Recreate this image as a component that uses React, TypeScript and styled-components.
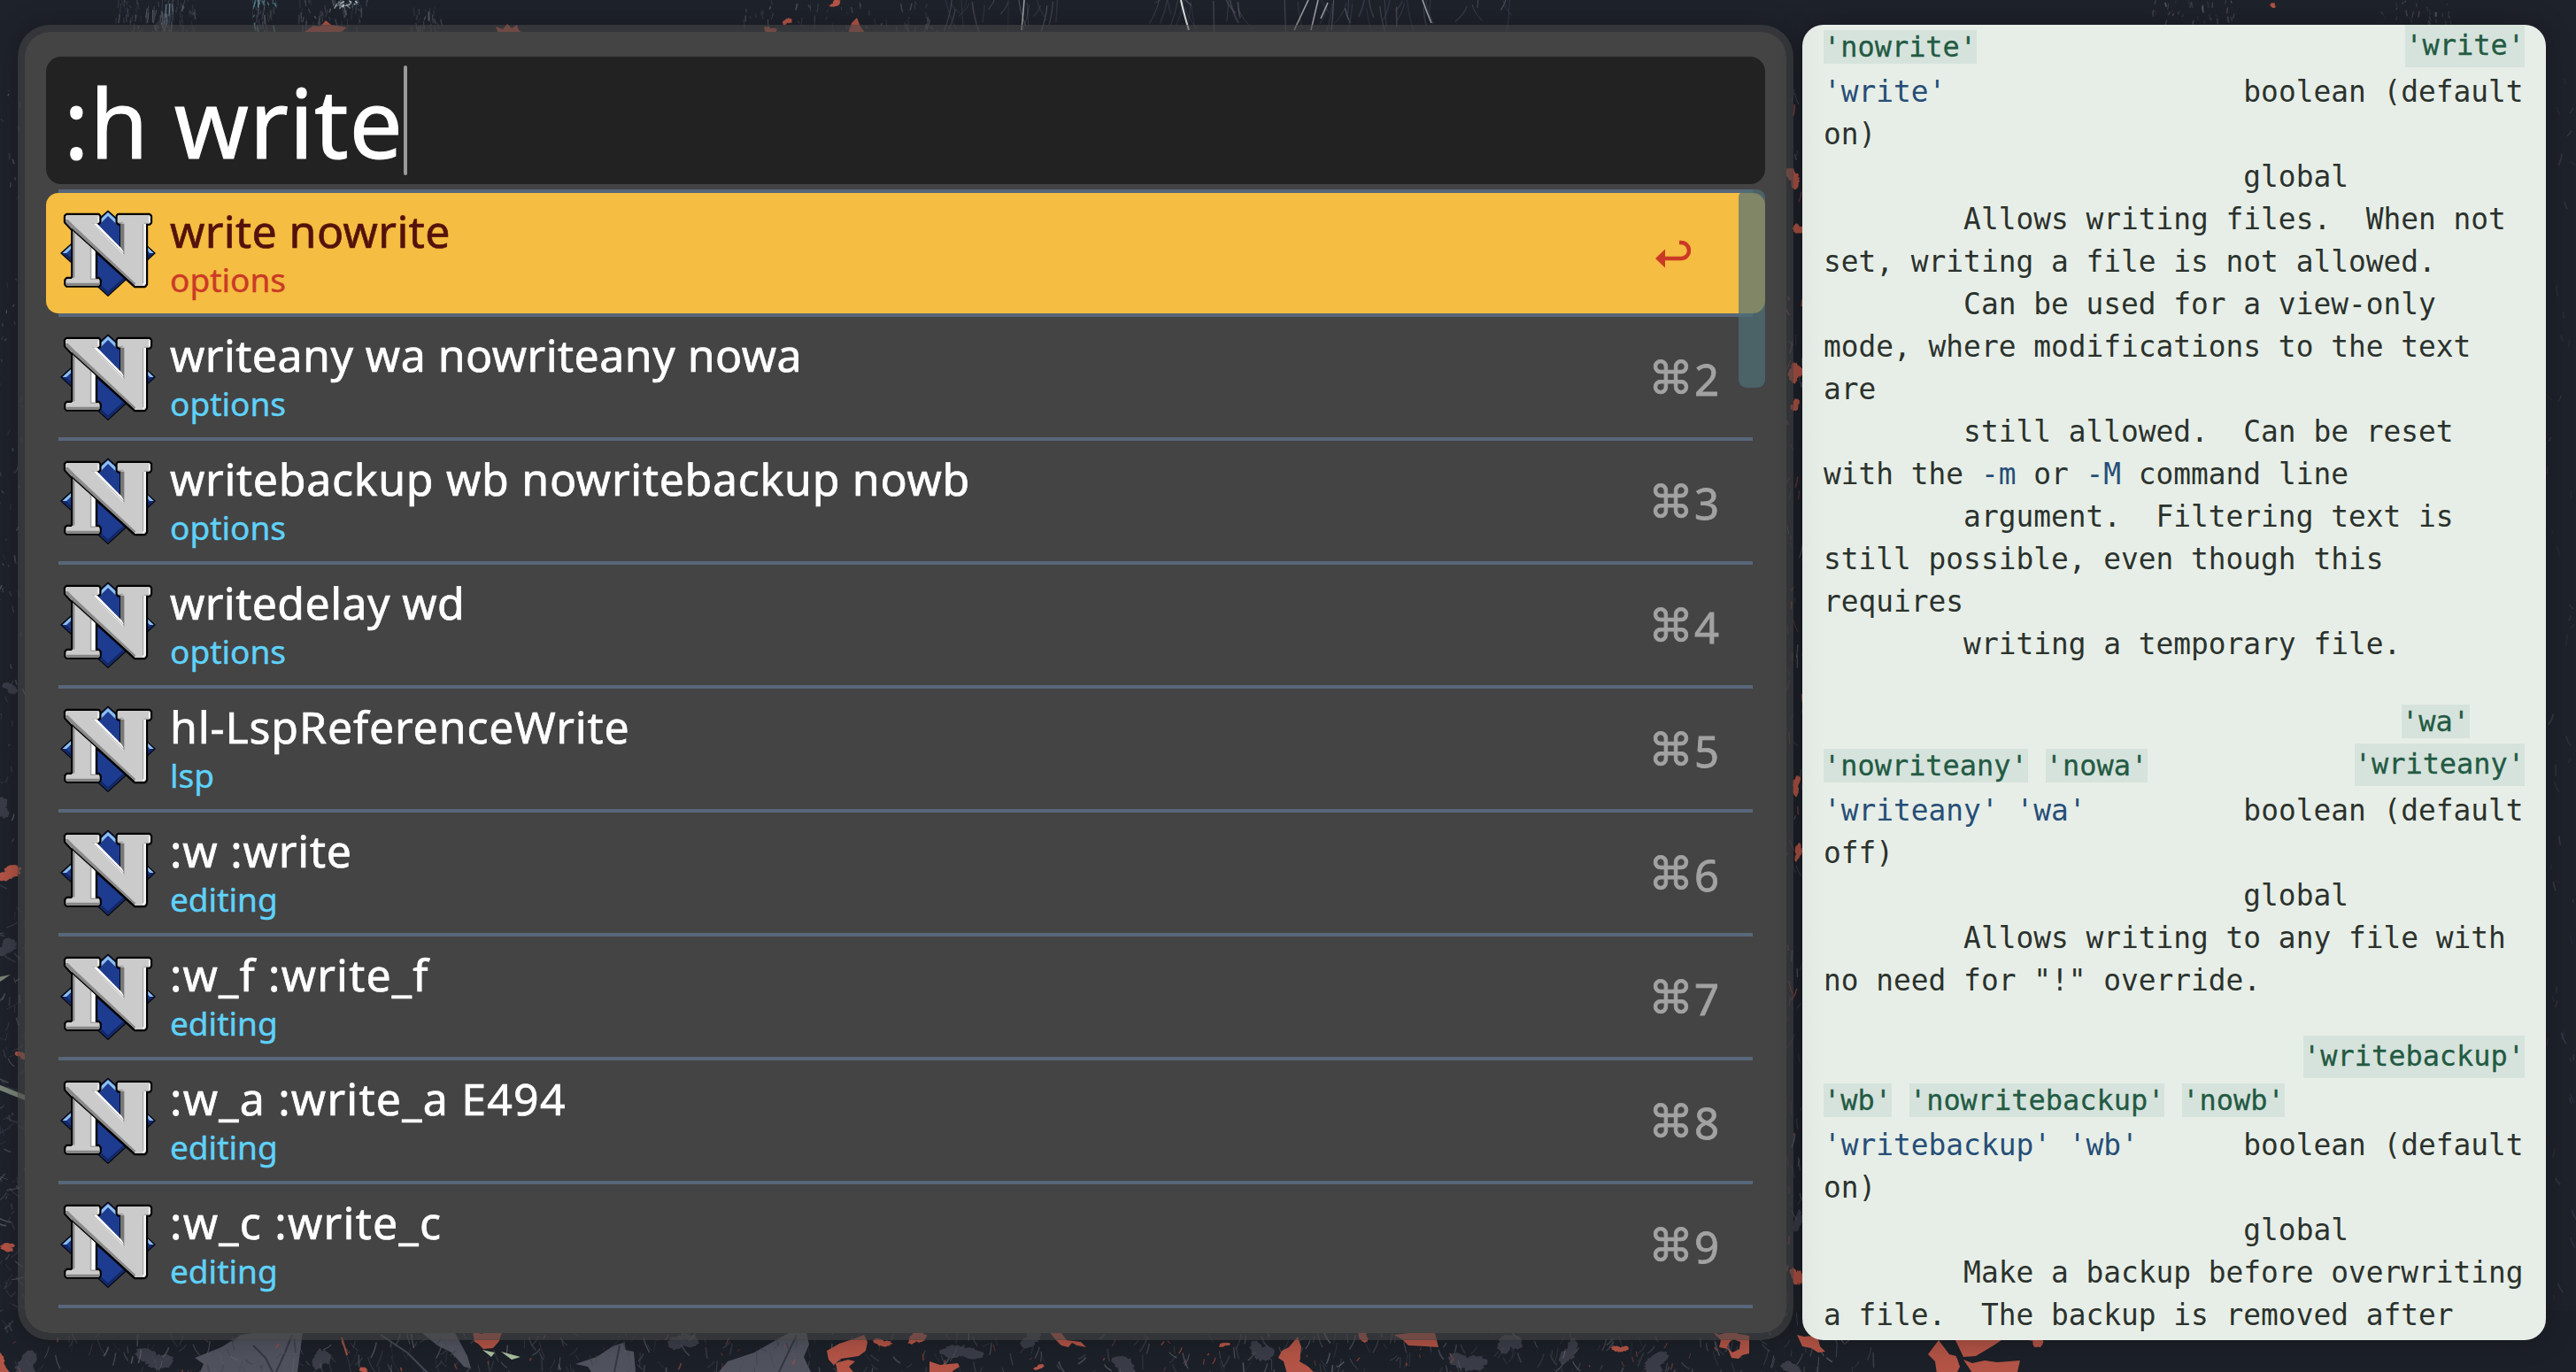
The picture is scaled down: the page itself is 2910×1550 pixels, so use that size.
import React from "react";
import styled, { createGlobalStyle } from "styled-components";

const GlobalStyle = createGlobalStyle`
  * { box-sizing: border-box; }
  body { margin: 0; background: #1e222b; overflow: hidden; }
`;

const Desktop = styled.div`
  position: relative;
  width: 2910px;
  height: 1550px;
  overflow: hidden;
  background: #1e222b;
`;

const Wallpaper = styled.svg`
  position: absolute;
  inset: 0;
`;

const Windows = styled.main`
  position: relative;
  display: flex;
  gap: 10px;
  padding: 28px 0 0 20px;
`;

const Launcher = styled.section`
  width: 2006px;
  height: 1486px;
  border: 8px solid rgba(68, 68, 68, 0.6);
  border-radius: 36px;
  background: #444;
  background-clip: padding-box;
  padding: 28px 24px 0;
  font-family: "Noto Sans", sans-serif;
  box-shadow: 0 0 30px rgba(0, 0, 0, 0.25);
`;

const SearchBox = styled.div`
  display: flex;
  align-items: center;
  height: 144px;
  padding-left: 20px;
  border-radius: 17px;
  background: #222;
`;

const Query = styled.span`
  padding-top: 3px;
  color: #fff;
  font-size: 107px;
  line-height: 144px;
  white-space: pre;
  letter-spacing: 0.75px;
  -webkit-text-stroke: 1px #fff;
`;

const Caret = styled.span`
  width: 4px;
  height: 124px;
  margin-top: -1px;
  border-radius: 2px;
  background: #999;
`;

const Results = styled.div`
  position: relative;
  margin-top: 6px;
`;

const Divider = styled.div`
  height: 4px;
  margin: 0 14px;
  background: #58677a;
`;

const Row = styled.div<{ $active?: boolean }>`
  display: flex;
  align-items: center;
  height: 136px;
  padding: 0 52px 0 16px;
  border-radius: 14px;
  background: ${(p) => (p.$active ? "#f5bd41" : "transparent")};
`;

const Labels = styled.div`
  display: flex;
  flex-direction: column;
  flex: 1;
  height: 136px;
  padding-left: 16px;
`;

const Title = styled.span<{ $active?: boolean; $tracking: number }>`
  height: 77px;
  line-height: 86px;
  font-size: 50px;
  letter-spacing: ${(p) => p.$tracking}px;
  white-space: pre;
  color: ${(p) => (p.$active ? "#54120c" : "#fff")};
  -webkit-text-stroke: 0.7px currentColor;
`;

const Subtitle = styled.span<{ $active?: boolean }>`
  line-height: 42px;
  font-size: 37px;
  color: ${(p) => (p.$active ? "#cb3a26" : "#5fd2fb")};
  -webkit-text-stroke: 0.4px currentColor;
`;

const Shortcut = styled.span`
  display: flex;
  align-items: center;
  gap: 1px;
  margin-top: 3px;
  color: #a2a2a2;
  font-size: 49px;
  line-height: 60px;
  -webkit-text-stroke: 0.8px currentColor;
`;

const CommandKey = styled.span`
  font-family: "DejaVu Sans", sans-serif;
  font-size: 51px;
  line-height: 60px;
`;

const ReturnIcon = styled.svg`
  margin: 2px 32px 0 0;
`;

const ScrollThumb = styled.div`
  position: absolute;
  top: 0;
  right: 0;
  width: 30px;
  height: 224px;
  border-radius: 9px;
  background: rgba(78, 111, 118, 0.7);
`;

const Preview = styled.section`
  width: 840px;
  height: 1486px;
  padding: 0 24px;
  border-radius: 24px;
  overflow: hidden;
  background: linear-gradient(90deg, #e2e8e2 0, #e7eee7 24px);
  color: #2b322d;
  font-family: "DejaVu Sans Mono", monospace;
  font-size: 32.83px;
  box-shadow: 0 0 30px rgba(0, 0, 0, 0.3);
`;

const Line = styled.div`
  height: 48px;
  line-height: 50px;
  white-space: pre;
`;

const Gap = styled.div<{ $size: number }>`
  height: ${(p) => p.$size}px;
`;

const TagRow = styled.div<{ $height: number; $end?: boolean }>`
  display: flex;
  align-items: flex-start;
  justify-content: ${(p) => (p.$end ? "flex-end" : "flex-start")};
  height: ${(p) => p.$height}px;
`;

const Tag = styled.span<{ $float?: boolean; $offset?: number }>`
  height: ${(p) => (p.$float ? 48 : 38)}px;
  margin-top: ${(p) => (p.$float ? 0 : p.$offset ?? 6)}px;
  margin-left: ${(p) => (p.$float ? "auto" : "0")};
  margin-right: ${(p) => (p.$float ? 0 : 20)}px;
  line-height: ${(p) => (p.$float ? 46 : 38)}px;
  font-size: 31.95px;
  color: #235a43;
  background: #d6e3dc;
  -webkit-text-stroke: 0.3px #235a43;
`;

const TrailingTag = styled(Tag)`
  margin-right: 62px;
`;

const Option = styled.span`
  color: #264e77;
`;

/* Deterministic pseudo-random source so the wallpaper is stable. */
function rng(seed: number) {
  let s = seed;
  return () => {
    s = (s * 1664525 + 1013904223) % 4294967296;
    return s / 4294967296;
  };
}

/* A torn leaf: a tilted, pinched outline with a ragged edge. */
function leaf(x0: number, y0: number, x1: number, y1: number, seed: number) {
  const r = rng(seed * 7919);
  r();
  const cx = (x0 + x1) / 2;
  const cy = (y0 + y1) / 2;
  const tilt = (r() - 0.5) * 0.9;
  const phase = r() * 6.28;
  const pts: string[] = [];
  for (let i = 0; i < 40; i++) {
    const a = (i / 40) * Math.PI * 2;
    const k = 0.68 + 0.24 * Math.cos(2 * a + phase) + 0.1 * Math.cos(3 * a - phase) + (r() - 0.5) * 0.22;
    const dx = (Math.cos(a) * k * (x1 - x0)) / 2;
    const dy = (Math.sin(a) * k * (y1 - y0)) / 2;
    pts.push(`${(cx + dx - dy * tilt).toFixed(1)},${(cy + dy + dx * tilt * 0.4).toFixed(1)}`);
  }
  return pts.join(" ");
}

type Blot = [number, number, number, number];

const greyLeaves: Blot[] = [
  [150, 1520, 200, 1552], [1060, 1515, 1110, 1540], [1150, 1500, 1180, 1525],
  [10, 1525, 50, 1560], [1250, 1530, 1290, 1556], [1636, 1522, 1680, 1556], [1690, 1500, 1720, 1535],
  [1760, 1510, 1785, 1545], [1850, 1526, 1890, 1556], [2010, 1535, 2040, 1560], [1410, 1510, 1440, 1545],
  [752, 1500, 790, 1530], [-10, 1060, 26, 1080], [-10, 900, 15, 925], [0, 770, 24, 785],
  [2026, 1360, 2036, 1400], [350, 1518, 375, 1552],
];

const redLeaves: Blot[] = [
  [-10, 1528, 12, 1556], [405, 1543, 418, 1555], [985, 1510, 1008, 1524], [1026, 1498, 1046, 1524],
  [1166, 1541, 1182, 1548], [1530, 1498, 1550, 1517], [2286, 1506, 2314, 1522], [1820, 1518, 1840, 1530],
  [1376, 1515, 1390, 1523], [-10, 976, 30, 998], [-6, 1404, 22, 1414], [16, 1186, 32, 1198],
  [862, 28, 878, 40], [884, 18, 895, 30], [935, 0, 953, 8], [2562, 3, 2573, 9],
  [2016, 186, 2036, 216], [2024, 250, 2038, 268], [2018, 405, 2038, 436], [2020, 450, 2036, 466],
  [2022, 875, 2036, 900], [2026, 950, 2037, 975], [2022, 1425, 2037, 1460],
];

function Scene() {
  const r = rng(77);
  const marks: React.ReactNode[] = [];
  const scratch = (
    key: string, n: number, x0: number, x1: number, y0: number, y1: number,
    len: number, slant: number, colors: string[]
  ) => {
    for (let i = 0; i < n; i++) {
      const x = x0 + r() * (x1 - x0);
      const y = y0 + r() * (y1 - y0);
      const l = len * (0.3 + r());
      const dx = (r() - 0.5) * slant;
      marks.push(
        <path
          key={key + i}
          d={`M${x.toFixed(1)} ${y.toFixed(1)}q${(dx * 0.2).toFixed(1)} ${(l / 2).toFixed(1)} ${dx.toFixed(1)} ${l.toFixed(1)}`}
          stroke={colors[Math.floor(r() * colors.length)]}
          strokeWidth={0.8 + r()}
          fill="none"
          opacity={0.35 + r() * 0.5}
        />
      );
    }
  };
  const greys = ["#4a4e59", "#5c606b", "#3a3f4a"];
  scratch("a", 90, 130, 220, -4, 36, 9, 4, greys);
  scratch("a2", 40, 172, 195, -4, 36, 12, 4, [...greys, "#7d97a3"]);
  scratch("b", 50, 285, 312, -4, 36, 9, 6, [...greys, "#76c0cf"]);
  scratch("c", 80, 335, 415, -4, 36, 9, 5, greys);
  scratch("c2", 20, 380, 402, 0, 6, 4, 12, ["#8fa8b0", "#d5e2e2"]);
  scratch("d", 30, 465, 500, 0, 34, 8, 4, greys);
  scratch("e", 60, 840, 1060, 0, 36, 8, 5, greys);
  scratch("f", 20, 1060, 1200, -8, 10, 34, 26, greys);
  scratch("g", 16, 1310, 1420, -8, 10, 34, 26, greys);
  scratch("h", 30, 1450, 1720, -8, 10, 34, 30, greys);
  scratch("i", 36, 2430, 2530, 0, 24, 6, 4, greys);
  scratch("j", 30, 2690, 2775, 0, 24, 6, 4, greys);
  scratch("k", 60, 0, 26, 100, 950, 6, 6, greys);
  scratch("l", 110, -6, 28, 980, 1500, 8, 30, greys);
  scratch("m", 420, 0, 2120, 1502, 1550, 14, 18, greys);
  scratch("n", 90, 2018, 2038, 100, 1500, 12, 12, [...greys, "#a54c42"]);
  scratch("o", 50, 2878, 2908, 60, 1500, 10, 12, ["#343945", "#3d424e"]);
  scratch("p", 60, 0, 2000, 1508, 1550, 6, 8, ["#a54c42"]);
  return (
    <Wallpaper width="2910" height="1550" viewBox="0 0 2910 1550">
      <rect y="1480" width="2910" height="70" fill="#1c2028" />
      {greyLeaves.map((b, i) => (
        <polygon key={"g" + i} points={leaf(b[0], b[1], b[2], b[3], i + 5)} fill="#3a3d48" />
      ))}
      <path
        d="M220 1534l30-12l22-14l28-4h42l-3 24l-3 22h-110l4-9zM650 1541l24-8l18-12l12-4l2 8l10 2l2 23h-50l-4-6zM812 1550l10-12l30-10l28-16l16-9l15 2l3 14l-6 14l8 17zM472 1502h40l16 30l4 14l-8-2l-14-16l-16-8z"
        fill="#50535e"
      />
      <path d="M286 1520l14 14l8 16M330 1508l-8 20l-10 22M700 1520l-6 30M900 1508l-20 42" stroke="#343843" strokeWidth="2" fill="none" />
      {marks}
      {redLeaves.map((b, i) => (
        <polygon key={"r" + i} points={leaf(b[0], b[1], b[2], b[3], i + 91)} fill="#b35446" />
      ))}
      <g fill="#b35446">
        <path d="M534 1504l10 3l14-5l9 3l-3 10l-7 8l-11 1l-6-6l-4-2z" />
        <path d="M934 1526l14-8l18-6l10-4l4 8l-2 10l-8 6l-20 3l-8 7l-6-6zM944 1540l14-4l8 2l-7 6l5 6h-18z" />
        <path d="M1050 1538l12 4l20-2l2 4l-8 5l2 3h-28z" />
        <path d="M1185 1504l14 2l6 8l16 2l6 6l-10-2l-6-3l-4 5l-8-2l-7-7z" />
        <path d="M1466 1510l4 12l-2 16l10 6l8 8h-32l-4-14l-6-4l4-8l8-4z" />
        <path d="M1575 1508l16-2l12-3l18 3l4 16l-14-1l-20-1l-6-6z" />
        <path fillRule="evenodd" d="M1934 1504l8 4l14-4l8 3l12 2v20l-8 2l-4 4l-8-1l-4-10l-10-2l2-8zM1954 1516l-3 6l6 6l8-4l1-8l-8-3z" />
        <path d="M2030 1508l8 2l10-1l6 4l2 8l6 6l-8 1l-8-5l-10-2z" />
        <path d="M2208 1512l22-8h38l-4 8l-12 8l-20 12l-14 1zM2190 1514l12 16l8 2l4 12l-4 8h-22l-2-14l-8-8zM2218 1536l10 4l14-3l14 2l26-2l-4 17h-48z" />
        <path d="M344 36l10-7l8 1l6-7l6 5l18 3l-8 6zM560 30l8 3l5-6l5 5l6-4l2 6l5 4h-28zM958 38l4-12l6-6l4 10l6 8z" />
      </g>
      <path d="M2200 1504l16 30M2218 1536l-8 -4" stroke="#1c2028" strokeWidth="2.5" fill="none" />
      <path d="M1334 0q3 14 9 34" stroke="#dfe5e4" strokeWidth="2" fill="none" />
      <path d="M1157 0q-1 14-3 34M1489 0l-8 34M1478 0l-16 34M1500 3l-8 18M1607 0q4 12 10 26" stroke="#9aa0a0" strokeWidth="1.6" fill="none" />
      <path d="M430 1508l30 20l24 24" stroke="#444853" strokeWidth="2" fill="none" />
      <path d="M545 1525l14 3l-4 5zM566 1527l22 6l-10 3z" fill="#a9bf9e" />
      <path d="M-2 1104l14-3l-12 8zM-2 1225l30 12v6l-30-12z" fill="#7b8578" />
      <path d="M386 1511l6 20" stroke="#a54c42" strokeWidth="2" />
    </Wallpaper>
  );
}

function NeovimIcon() {
  return (
    <svg width="108" height="98" viewBox="54 51 324 294">
      <path d="M216 55L375 198L216 343L57 198Z" fill="#1d3b8f" stroke="#06070b" strokeWidth="4" strokeLinejoin="round" />
      <path d="M186 88L216 60L247 88L241 96L216 72L192 96ZM62 198L90 172V184L75 198ZM346 173L371 198L358 198L346 186Z" fill="#8fc0ee" />
      <path d="M62 199H75L90 212V224ZM371 199H358L346 210V222ZM188 312L216 338L274 286L268 281L216 328L192 306Z" fill="#122766" />
      <g stroke="#000" strokeWidth="13" strokeLinejoin="round" fill="#000">
        <path d="M97 118V280L92 285H77L73 290V304L77 308H184L188 304V290L184 285H174V190Z" />
        <path d="M76 69H184L187 73V92L183 97H168L262 192V100L251 97L248 92V72L251 69H356L360 73V94L356 98H345V303L340 309H307L98 120L72 92V73Z" />
      </g>
      <path d="M97 123V280L92 285H77L73 290V304L77 308H184L188 304V290L184 285H174V192Z" fill="#cbcbcb" />
      <path d="M73 301V304L77 308H184L188 304V299H78ZM97 123L103 129V280L97 282Z" fill="#868686" />
      <path d="M161 181L171 190V283H161Z" fill="#fff" />
      <path d="M157 178V286H183" fill="none" stroke="#8c8c8c" strokeWidth="2" />
      <path d="M76 69H184L187 73V92L183 97H163L268 201V100L251 97L248 92V72L251 69H356L360 73V94L356 98H345V303L340 309H307L98 120L72 92V73Z" fill="#cbcbcb" />
      <path d="M95 113L305 309" stroke="#000" strokeWidth="6" />
      <path d="M72 84V92L98 118L305 306L310 301L104 108L80 84Z" fill="#8a8a8a" />
      <path d="M258 98H271V203L258 190Z" fill="#777" />
      <path d="M161 97L268 203L268 193L262 182L178 97Z" fill="#fff" />
      <path d="M163 96L268 198" stroke="#777" strokeWidth="2" />
      <path d="M336 98H345V300L338 307H332L336 300ZM354 74H359V93L354 96ZM181 74H186V90L181 94Z" fill="#f2f2f2" />
      <path d="M335 99V300M248 94H268M338 97H356" stroke="#888" strokeWidth="2" fill="none" />
    </svg>
  );
}

const results = [
  { title: "write nowrite", section: "options", tracking: 0.42 },
  { title: "writeany wa nowriteany nowa", section: "options", tracking: 0.48 },
  { title: "writebackup wb nowritebackup nowb", section: "options", tracking: 0.73 },
  { title: "writedelay wd", section: "options", tracking: 0.44 },
  { title: "hl-LspReferenceWrite", section: "lsp", tracking: 0.86 },
  { title: ":w :write", section: "editing", tracking: 0.85 },
  { title: ":w_f :write_f", section: "editing", tracking: 1.2 },
  { title: ":w_a :write_a E494", section: "editing", tracking: 1.25 },
  { title: ":w_c :write_c", section: "editing", tracking: 1.28 },
];

function ResultList() {
  return (
    <Results>
      <Divider />
      {results.map((item, i) => (
        <React.Fragment key={item.title}>
          <Row $active={i === 0}>
            <NeovimIcon />
            <Labels>
              <Title $active={i === 0} $tracking={item.tracking}>{item.title}</Title>
              <Subtitle $active={i === 0}>{item.section}</Subtitle>
            </Labels>
            {i === 0 ? (
              <ReturnIcon width="40" height="32" viewBox="0 0 40 32">
                <path d="M27 3H29A8.8 8.8 0 0 1 29 21H10" fill="none" stroke="#cb3a26" strokeWidth="4.4" />
                <path d="M0 21L11 10.5V31.5Z" fill="#cb3a26" />
              </ReturnIcon>
            ) : (
              <Shortcut>
                <CommandKey>⌘</CommandKey>
                {i + 1}
              </Shortcut>
            )}
          </Row>
          <Divider />
        </React.Fragment>
      ))}
      <ScrollThumb />
    </Results>
  );
}

function HelpPreview() {
  return (
    <Preview>
      <TagRow $height={51}>
        <Tag>'nowrite'</Tag>
        <Tag $float>'write'</Tag>
      </TagRow>
      <Line><Option>'write'</Option>{"                 boolean (default"}</Line>
      <Line>on)</Line>
      <Line>{"                        global"}</Line>
      <Line>{"        Allows writing files.  When not"}</Line>
      <Line>set, writing a file is not allowed.</Line>
      <Line>{"        Can be used for a view-only"}</Line>
      <Line>mode, where modifications to the text</Line>
      <Line>are</Line>
      <Line>{"        still allowed.  Can be reset"}</Line>
      <Line>with the <Option>-m</Option> or <Option>-M</Option> command line</Line>
      <Line>{"        argument.  Filtering text is"}</Line>
      <Line>still possible, even though this</Line>
      <Line>requires</Line>
      <Line>{"        writing a temporary file."}</Line>
      <Gap $size={45} />
      <TagRow $height={44} $end>
        <TrailingTag $offset={0}>'wa'</TrailingTag>
      </TagRow>
      <TagRow $height={51}>
        <Tag>'nowriteany'</Tag>
        <Tag>'nowa'</Tag>
        <Tag $float>'writeany'</Tag>
      </TagRow>
      <Line><Option>'writeany'</Option> <Option>'wa'</Option>{"         boolean (default"}</Line>
      <Line>off)</Line>
      <Line>{"                        global"}</Line>
      <Line>{"        Allows writing to any file with"}</Line>
      <Line>no need for "!" override.</Line>
      <Gap $size={39} />
      <TagRow $height={48}>
        <Tag $float>'writebackup'</Tag>
      </TagRow>
      <TagRow $height={51}>
        <Tag>'wb'</Tag>
        <Tag>'nowritebackup'</Tag>
        <Tag>'nowb'</Tag>
      </TagRow>
      <Line><Option>'writebackup'</Option> <Option>'wb'</Option>{"      boolean (default"}</Line>
      <Line>on)</Line>
      <Line>{"                        global"}</Line>
      <Line>{"        Make a backup before overwriting"}</Line>
      <Line>a file.  The backup is removed after</Line>
    </Preview>
  );
}

export default function App() {
  return (
    <Desktop>
      <GlobalStyle />
      <Scene />
      <Windows>
        <Launcher>
          <SearchBox>
            <Query>:h write</Query>
            <Caret />
          </SearchBox>
          <ResultList />
        </Launcher>
        <HelpPreview />
      </Windows>
    </Desktop>
  );
}
